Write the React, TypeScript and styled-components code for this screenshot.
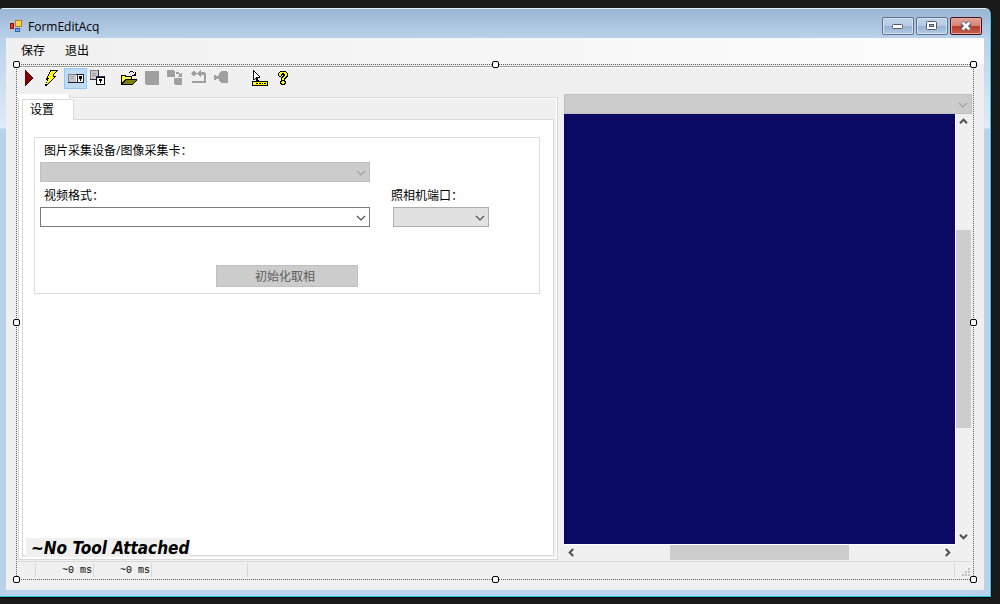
import React from 'react';
import styled, { createGlobalStyle, css } from 'styled-components';

const GlobalStyle = createGlobalStyle`
  *, *::before, *::after { box-sizing: border-box; }
  body {
    margin: 0;
    background: #1a1a1a;
    color: #000;
    font-family: "Open Sans", "Noto Sans CJK SC", sans-serif;
    font-size: 12px;
    line-height: 16px;
  }
  button, select { font: inherit; color: inherit; margin: 0; padding: 0; border-radius: 0; }
  svg { display: block; }
`;

const Desktop = styled.div`
  display: flex;
  min-height: 100vh;
  padding: 8px 9px 7px 0;
`;

const Window = styled.div`
  flex: 1;
  min-width: 0;
  display: flex;
  flex-direction: column;
  padding: 0 6px 6px;
  border-top: 1px solid #e4eef8;
  border-right: 1px solid #35c5e6;
  border-bottom: 1px solid #22c4de;
  border-top-right-radius: 6px;
  border-top-left-radius: 3px;
  background: linear-gradient(#9ab5d3 0, #b9d1ea 29px, #dfebf7 119px, #b9d1ea 120px);
  box-shadow: 1px 1px 0 #000;
`;

const TitleBar = styled.header`
  height: 29px;
  display: flex;
  align-items: center;
  gap: 5px;
  margin: 0 -6px;
  padding: 0 8px 0 9px;
  background: linear-gradient(#9ab5d3, #b9d1ea);
  border-top-right-radius: 5px;
`;

const Title = styled.h1`
  flex: 1;
  margin: 0;
  padding-top: 6px;
  font-size: 12px;
  font-weight: 400;
  line-height: 16px;
`;

const TitleIcon = styled.span`
  padding-top: 5px;
`;

const CaptionButtons = styled.div`
  display: flex;
  gap: 2px;
  padding-top: 4px;
`;

const CaptionButton = styled.button<{ $close?: boolean }>`
  width: 32px;
  height: 18px;
  display: grid;
  place-items: center;
  border: 1px solid ${p => (p.$close ? '#43141c' : '#61728f')};
  border-radius: 2px;
  box-shadow: inset 0 0 0 1px ${p => (p.$close ? '#e7a99f' : '#d3e2f2')};
  background: ${p =>
    p.$close
      ? 'linear-gradient(#e3a197 0, #d58375 50%, #b7392a 50%, #c8604c 100%)'
      : 'linear-gradient(#c1d4e9 0, #b5cbe4 50%, #96b2d2 50%, #b2cae5 100%)'};
`;

const Client = styled.div`
  flex: 1;
  display: flex;
  flex-direction: column;
  background: #f0f0f0;
`;

const MenuBar = styled.nav`
  height: 26px;
  display: flex;
  align-items: center;
  gap: 20px;
  padding: 0 15px;
  background: linear-gradient(90deg, #f0f0f0, #fdfdfd);
`;

const MenuItem = styled.button`
  border: 0;
  background: none;
`;

const Selection = styled.div`
  position: relative;
  flex: 1;
  display: flex;
  flex-direction: column;
  margin: 0 10px 10px;
  padding-top: 1px;
  border: 1px dotted #606060;
`;

const Handle = styled.span<{ $x: 0 | 1 | 2; $y: 0 | 1 | 2 }>`
  position: absolute;
  z-index: 3;
  width: 7px;
  height: 7px;
  background: #fff;
  border: 1px solid #000;
  border-radius: 2px;
  left: ${p => p.$x * 50}%;
  top: ${p => p.$y * 50}%;
  margin-left: ${p => [-4, -3, -3][p.$x]}px;
  margin-top: ${p => [-4, -3, -3][p.$y]}px;
`;

const ToolBar = styled.div`
  height: 28px;
  display: flex;
  align-items: flex-start;
  padding-left: 1px;
  border-top: 1px solid #a0a0a0;
  box-shadow: inset 0 1px 0 #fff;
`;

const ToolGroup = styled.div`
  display: flex;
  padding-top: 1px;
  & + & { margin-left: 7px; }
  & + & + & { margin-left: 16px; }
`;

const ToolButton = styled.button<{ $active?: boolean }>`
  width: 23px;
  height: 21px;
  border: 1px solid ${p => (p.$active ? '#90c8f6' : 'transparent')};
  background: ${p => (p.$active ? '#c0dcf3' : 'none')};
  padding: 1px 1px 0 2px;
`;

const Panels = styled.main`
  flex: 1;
  display: grid;
  grid-template-columns: minmax(0, 540fr) minmax(0, 408fr);
  gap: 6px;
  padding: 0 1px;
`;

const OuterTabs = styled.section`
  display: flex;
  flex-direction: column;
  padding-bottom: 1px;
`;

const OuterTab = styled.div`
  position: relative;
  z-index: 1;
  width: 52px;
  height: 4px;
  margin-bottom: -1px;
  background: #fff;
  border-right: 1px solid #d9d9d9;
`;

const OuterPage = styled.div`
  flex: 1;
  display: flex;
  padding: 1px 1px 2px 3px;
  border: 1px solid #d9d9d9;
  background: #fff;
`;

const InnerTabs = styled.div`
  position: relative;
  flex: 1;
  min-width: 0;
  display: flex;
  flex-direction: column;
  padding: 0 2px 1px 0;
  background: #f0f0f0;
`;

const InnerTab = styled.button`
  position: relative;
  z-index: 1;
  align-self: flex-start;
  width: 52px;
  height: 21px;
  margin-bottom: -1px;
  padding: 0 8px 0 7px;
  text-align: left;
  background: #fff;
  border: 1px solid #d9d9d9;
  border-bottom: 0;
`;

const InnerPage = styled.div`
  flex: 1;
  padding: 17px 13px 60px 11px;
  background: #fff;
  border: 1px solid #d9d9d9;
`;

const DeviceForm = styled.fieldset`
  display: grid;
  grid-template-columns: minmax(0, 330px) 96px;
  column-gap: 23px;
  min-width: 0;
  margin: 0;
  padding: 0 5px 6px;
  border: 1px solid #dcdcdc;
`;

const Field = styled.div<{ $wide?: boolean }>`
  display: flex;
  flex-direction: column;
  ${p => p.$wide && css`grid-column: 1 / -1; max-width: 330px;`}
`;

const FieldLabel = styled.label<{ $first?: boolean }>`
  height: ${p => (p.$first ? 24 : 25)}px;
  padding: ${p => (p.$first ? 5 : 6)}px 0 0 4px;
  line-height: 16px;
  white-space: nowrap;
`;

const PortLabel = styled(FieldLabel)`
  padding-left: 0;
  margin-left: -2px;
`;

type Tone = 'disabled' | 'plain' | 'light';
const tones: Record<Tone, { bg: string; border: string; arrow: string }> = {
  disabled: { bg: '#cccccc', border: '#bfbfbf', arrow: '#a0a0a0' },
  plain: { bg: '#ffffff', border: '#7a7a7a', arrow: '#505050' },
  light: { bg: '#e1e1e1', border: '#adadad', arrow: '#505050' },
};

const ComboBox = styled.div`
  display: grid;
  align-items: center;
  & > * { grid-area: 1 / 1; }
  & > svg { justify-self: end; margin: 1px 4px 0 0; pointer-events: none; }
`;

const ComboSelect = styled.select<{ $tone: Tone }>`
  appearance: none;
  width: 100%;
  height: 20px;
  opacity: 1;
  background: ${p => tones[p.$tone].bg};
  border: 1px solid ${p => tones[p.$tone].border};
`;

const InitButton = styled.button`
  justify-self: end;
  width: 142px;
  height: 22px;
  margin: 38px 12px 0 0;
  padding: 2px 4px 0 0;
  color: #5c5c5c;
  background: #ccc;
  border: 1px solid #bfbfbf;
`;

const ToolStatus = styled.div`
  position: absolute;
  z-index: 1;
  left: 4px;
  bottom: 0;
  width: 164px;
  height: 19px;
  padding-left: 5px;
  background: #f0f0f0;
  font: italic 700 17px/20px "DejaVu Sans Condensed", "DejaVu Sans", sans-serif;
  white-space: nowrap;
`;

const Display = styled.section`
  display: grid;
  grid-template-columns: minmax(0, 1fr) 17px;
  grid-template-rows: 20px minmax(0, 1fr) 17px;
`;

const DisplaySource = styled(ComboBox)`
  grid-column: 1 / -1;
`;

const Viewport = styled.div`
  background: #0a0a64;
`;

const ScrollBar = styled.div<{ $vertical?: boolean }>`
  display: flex;
  flex-direction: ${p => (p.$vertical ? 'column' : 'row')};
  padding: ${p => (p.$vertical ? '0 1px' : '1px 0')};
  box-shadow: inset ${p => (p.$vertical ? '1px 0' : '0 1px')} 0 #fff;
`;

const ScrollArrow = styled.button`
  width: 15px;
  height: 15px;
  flex: none;
  display: grid;
  place-items: center;
  border: 0;
  background: none;
`;

const ScrollSpace = styled.div<{ $grow: number }>`
  flex: ${p => p.$grow} 1 0;
`;

const ScrollThumb = styled(ScrollSpace)`
  background: #cdcdcd;
`;

const StatusBar = styled.footer`
  height: 18px;
  display: flex;
  margin: 0 2px 0 1px;
  padding: 1px 0 2px;
  border-top: 1px solid #d9d9d9;
  font: 10px/16px "Liberation Mono", monospace;
`;

const StatusCell = styled.span<{ $width?: number }>`
  flex: ${p => (p.$width ? 'none' : '1')};
  width: ${p => (p.$width ? `${p.$width}px` : 'auto')};
  padding-right: 1px;
  text-align: right;
  border-right: 1px solid #d7d7d7;
`;

const Grip = styled.span`
  width: 16px;
  display: flex;
  align-items: flex-end;
  justify-content: flex-end;
`;

const Icon = ({ children }: { children: React.ReactNode }) => (
  <svg width="18" height="18" viewBox="0 0 18 18" shapeRendering="crispEdges" aria-hidden="true">
    {children}
  </svg>
);

const Chevron = ({ color }: { color: string }) => (
  <svg width="10" height="6" viewBox="0 0 10 6" aria-hidden="true">
    <path d="M1 1l4 4 4-4" fill="none" stroke={color} strokeWidth="1.2" />
  </svg>
);

const ScrollGlyph = ({ turn }: { turn: number }) => (
  <svg width="9" height="9" viewBox="0 0 9 9" aria-hidden="true">
    <path d="M1 6.2l3.500-3.500 3.500 3.500" fill="none" stroke="#505050" strokeWidth="2" transform={`rotate(${turn} 4.500 4.500)`} />
  </svg>
);

const RunIcon = () => (
  <Icon>
    <path d="M4 0h1v1h1v1h1v1h1v1h1v1h1v1h1v1h1v2h-1v1h-1v1H9v1H8v1H7v1H6v1H5v1H4z" fill="#400000" />
    <path d="M4 1h1v1h1v1h1v1h1v1h1v1h1v1h1v2h-1v1H9v1H8v1H7v1H6v1H5v1H4z" fill="#800000" />
  </Icon>
);

const BoltIcon = () => (
  <Icon>
    <path d="M6 0h8v1h-1v1h-1v1h-1v1h-1v2h2v1h-1v1h-1v1H9v1H8v1H7v1H6v1H5v1H4v1H3v1H1v-2h1v-2h1v-2H2V8h1V6h1V4h1V2h1z" fill="#000" />
    <path d="M7 1h5v1h-1v1h-1v1H9v3h1v1H9v1H8v1H7v1H6v1H5v1H4v1H2v-1h1v-2h1V9h1V8H4V6h1V4h1V2h1z" fill="#ff0" />
  </Icon>
);

const LocalDisplayIcon = () => (
  <Icon>
    <path d="M1 4h16v9H1z" fill="#202038" />
    <path d="M1 4h8v8H1z" fill="#808088" />
    <path d="M2 5h7v7H2z" fill="#c8c8c8" />
    <path d="M3 6h4v1H3zM3 8h4v1H3z" fill="#a8a8a8" />
    <path d="M9 5h1v7H9zM11 5h5v7h-5z" fill="#fff" />
    <path d="M12 6h3v3h-1v2h-1V9h-1z" fill="#000" />
  </Icon>
);

const FloatingDisplayIcon = () => (
  <Icon>
    <path d="M0 0h9v10H0z" fill="#303030" />
    <path d="M0 0h8v9H0z" fill="#808088" />
    <path d="M1 1h7v8H1z" fill="#c8c8c8" />
    <path d="M2 3h4v1H2zM2 5h4v1H2z" fill="#999" />
    <path d="M6 6h9v9H6z" fill="#000" />
    <path d="M6 6h8v1H6z" fill="#303060" />
    <path d="M7 8h7v6H7z" fill="#fff" />
    <path d="M9 9h3v2h-1v2h-1v-2H9z" fill="#000" />
  </Icon>
);

const OpenIcon = () => (
  <Icon>
    <path d="M1 5h4l1 1h6v3h5v1l-4 5H1z" fill="#000" />
    <path d="M2 6h2l1 1h6v2H5l-3 4z" fill="#ff0" />
    <path d="M3 7h1v1H3zM5 8h1v1H5zM7 7h1v1H7zM9 8h1v1H9zM2 9h1v1H2z" fill="#fff" />
    <path d="M6 10h10l-4 4H3z" fill="#808000" />
    <path d="M9 2h1v1H9zM10 1h3v1h-3zM13 2h1v1h-1zM15 2h1v4h-4V5h2V4h1z" fill="#000" />
  </Icon>
);

const SaveIcon = () => (
  <Icon>
    <path d="M2 1h14v14H3l-1-1z" fill="#a0a0a0" />
  </Icon>
);

const SwapIcon = () => (
  <Icon>
    <path d="M1 0h7v1h1v6H1zM8 8h8v7H9l-1-1zM10 2h3v1h1v1h1V3h1v4h-4V6h1V4h-3z" fill="#a0a0a0" />
  </Icon>
);

const ResetIcon = () => (
  <Icon>
    <path d="M4 1h2v1h1v1h1v1H7v1H6v1H4V5H3V4H2V3h1V2h1zM12 0v2h4v1h1v10H3v-2h12V5h-3v2h-1V6h-1V5H9V4H8V3h1V2h1V1h1V0z" fill="#a0a0a0" />
  </Icon>
);

const CameraIcon = () => (
  <Icon>
    <path d="M2 5h2v1h2V5h1V3h1V2h1V1h6v1h1v11H9v-1H8v-1H7V9H4v1H2z" fill="#a0a0a0" />
  </Icon>
);

const PointerIcon = () => (
  <Icon>
    <path d="M2 0h1v1h1v1h1v1h1v1h1v1h1v1h1v2H7v2h1v1H5V9H4v1H2z" fill="#000" />
    <path d="M3 2h1v1h1v1h1v1h1v1h1v1H5v1H4v1H3z" fill="#fff" />
    <path d="M1 11h16v5H1z" fill="#000" />
    <path d="M2 12h14v3H2z" fill="#ff0" />
    <path d="M5 13h2v1H5zM8 13h2v1H8zM11 13h1v1h-1zM13 13h2v1h-2z" fill="#000" />
  </Icon>
);

const HelpIcon = () => (
  <Icon>
    <path d="M6 1h6v1h1v1h1v4h-1v1h-1v1h-1v2h1v3h-1v1H7v-1H6v-3h1V7h1V6h1V5H8v1H7v1H5V6H4V3h1V2h1z" fill="#000" />
    <path d="M6 2h6v1h1v3h-1v1h-1v1h-1v2H8V8h1V7h1V6h1V4h-1V3H8v1H7v2H5V3h1zM8 11h2v1h1v1h-1v1H8v-1H7v-1h1z" fill="#ff0" />
  </Icon>
);

const AppIcon = () => (
  <svg width="14" height="14" viewBox="0 0 14 14" shapeRendering="crispEdges" aria-hidden="true">
    <path d="M0 1h13v12H0z" fill="#b4c5d8" />
    <path d="M1 4h4v6H1z" fill="#8d1510" />
    <path d="M2 5h2v4H2z" fill="#e03c28" />
    <path d="M6 1h7v7H6z" fill="#b57f10" />
    <path d="M7 2h5v5H7z" fill="#ffd34a" />
    <path d="M6 9h5v4H6z" fill="#2b5fb8" />
    <path d="M7 10h3v2H7z" fill="#79a8f0" />
  </svg>
);

const MinimizeIcon = () => (
  <svg width="12" height="6" viewBox="0 0 12 6" aria-hidden="true">
    <rect x=".5" y="1.500" width="10" height="4" rx="1" fill="#fff" stroke="#535666" />
  </svg>
);

const MaximizeIcon = () => (
  <svg width="12" height="10" viewBox="0 0 12 10" aria-hidden="true">
    <rect x=".5" y=".5" width="10" height="8" rx="1" fill="#fff" stroke="#535666" />
    <rect x="3.500" y="3.500" width="4" height="2" fill="#9ab5d3" stroke="#535666" />
  </svg>
);

const CloseIcon = () => (
  <svg width="12" height="10" viewBox="0 0 12 10" aria-hidden="true">
    <path d="M2 1.500l8 7m0-7l-8 7" stroke="#535666" strokeWidth="4.500" />
    <path d="M2.500 1.500l7 7m0-7l-7 7" stroke="#fff" strokeWidth="2.600" />
  </svg>
);

const GripIcon = () => (
  <svg width="9" height="9" viewBox="0 0 9 9" shapeRendering="crispEdges" aria-hidden="true">
    <path d="M6 0h2v2H6zM6 3h2v2H6zM3 3h2v2H3zM6 6h2v2H6zM3 6h2v2H3zM0 6h2v2H0z" fill="#bfbfbf" />
  </svg>
);

interface Tool {
  name: string;
  icon: React.ReactNode;
  active?: boolean;
}

const toolGroups: Tool[][] = [
  [
    { name: 'Run', icon: <RunIcon /> },
    { name: 'Electric', icon: <BoltIcon /> },
    { name: 'Local display', icon: <LocalDisplayIcon />, active: true },
    { name: 'Floating display', icon: <FloatingDisplayIcon /> },
  ],
  [
    { name: 'Open', icon: <OpenIcon /> },
    { name: 'Save', icon: <SaveIcon /> },
    { name: 'Save as', icon: <SwapIcon /> },
    { name: 'Reset', icon: <ResetIcon /> },
    { name: 'Live', icon: <CameraIcon /> },
  ],
  [
    { name: 'Tooltips', icon: <PointerIcon /> },
    { name: 'Help', icon: <HelpIcon /> },
  ],
];

const handles: [0 | 1 | 2, 0 | 1 | 2][] = [
  [0, 0], [1, 0], [2, 0], [0, 1], [2, 1], [0, 2], [1, 2], [2, 2],
];

const Combo = ({ id, tone }: { id: string; tone: Tone }) => (
  <ComboBox>
    <ComboSelect id={id} $tone={tone} disabled={tone === 'disabled'} />
    <Chevron color={tones[tone].arrow} />
  </ComboBox>
);

export default function App() {
  return (
    <>
      <GlobalStyle />
      <Desktop>
        <Window>
          <TitleBar>
            <TitleIcon><AppIcon /></TitleIcon>
            <Title>FormEditAcq</Title>
            <CaptionButtons>
              <CaptionButton aria-label="Minimize"><MinimizeIcon /></CaptionButton>
              <CaptionButton aria-label="Maximize"><MaximizeIcon /></CaptionButton>
              <CaptionButton aria-label="Close" $close><CloseIcon /></CaptionButton>
            </CaptionButtons>
          </TitleBar>
          <Client>
            <MenuBar>
              <MenuItem>保存</MenuItem>
              <MenuItem>退出</MenuItem>
            </MenuBar>
            <Selection>
              <ToolBar role="toolbar">
                {toolGroups.map((group, i) => (
                  <ToolGroup key={i}>
                    {group.map(tool => (
                      <ToolButton key={tool.name} aria-label={tool.name} $active={tool.active}>
                        {tool.icon}
                      </ToolButton>
                    ))}
                  </ToolGroup>
                ))}
              </ToolBar>
              <Panels>
                <OuterTabs>
                  <OuterTab />
                  <OuterPage>
                    <InnerTabs>
                      <InnerTab role="tab" aria-selected>设置</InnerTab>
                      <InnerPage>
                        <DeviceForm>
                          <Field $wide>
                            <FieldLabel htmlFor="device" $first>图片采集设备/图像采集卡：</FieldLabel>
                            <Combo id="device" tone="disabled" />
                          </Field>
                          <Field>
                            <FieldLabel htmlFor="format">视频格式：</FieldLabel>
                            <Combo id="format" tone="plain" />
                          </Field>
                          <Field>
                            <PortLabel htmlFor="port">照相机端口：</PortLabel>
                            <Combo id="port" tone="light" />
                          </Field>
                          <InitButton disabled>初始化取相</InitButton>
                        </DeviceForm>
                      </InnerPage>
                      <ToolStatus>~No Tool Attached</ToolStatus>
                    </InnerTabs>
                  </OuterPage>
                </OuterTabs>
                <Display>
                  <DisplaySource>
                    <ComboSelect $tone="disabled" disabled aria-label="Display source" />
                    <Chevron color="#a0a0a0" />
                  </DisplaySource>
                  <Viewport />
                  <ScrollBar $vertical>
                    <ScrollArrow aria-label="Scroll up"><ScrollGlyph turn={0} /></ScrollArrow>
                    <ScrollSpace $grow={101} />
                    <ScrollThumb $grow={198} />
                    <ScrollSpace $grow={101} />
                    <ScrollArrow aria-label="Scroll down"><ScrollGlyph turn={180} /></ScrollArrow>
                  </ScrollBar>
                  <ScrollBar>
                    <ScrollArrow aria-label="Scroll left"><ScrollGlyph turn={-90} /></ScrollArrow>
                    <ScrollSpace $grow={91} />
                    <ScrollThumb $grow={179} />
                    <ScrollSpace $grow={91} />
                    <ScrollArrow aria-label="Scroll right"><ScrollGlyph turn={90} /></ScrollArrow>
                  </ScrollBar>
                </Display>
              </Panels>
              <StatusBar>
                <StatusCell $width={18} />
                <StatusCell $width={58}>~0 ms</StatusCell>
                <StatusCell $width={58}>~0 ms</StatusCell>
                <StatusCell $width={96} />
                <StatusCell />
                <Grip><GripIcon /></Grip>
              </StatusBar>
              {handles.map(([x, y]) => (
                <Handle key={`${x}${y}`} $x={x} $y={y} />
              ))}
            </Selection>
          </Client>
        </Window>
      </Desktop>
    </>
  );
}
